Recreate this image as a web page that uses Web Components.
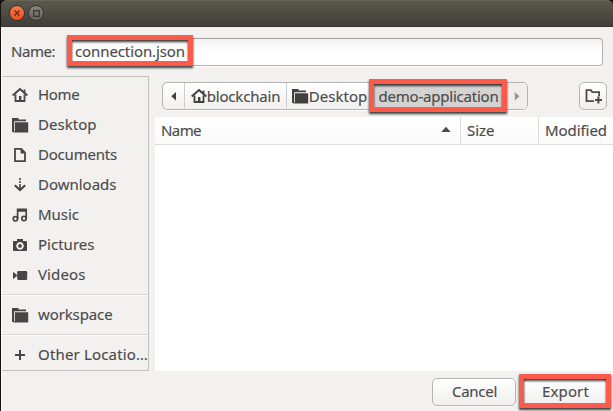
<!DOCTYPE html>
<html lang="en">
<head>
<meta charset="utf-8">
<title>Export</title>
<style>
html,body{margin:0;height:100%;overflow:hidden;background:#151214}
body{font:15px/20px "Noto Sans","Open Sans",sans-serif;color:#4b4b4b;-webkit-text-stroke:.15px}
</style>
</head>
<body>
<save-dialog></save-dialog>
<script>
const define=(name,html,setup)=>customElements.define(name,class extends HTMLElement{
  connectedCallback(){
    if(this.shadowRoot)return;
    this.attachShadow({mode:'open'}).innerHTML=html;
    if(setup)setup(this,this.shadowRoot);
  }
});

/* Text label whose tracking is adjusted to a given advance width. */
define('ui-label',`<style>:host{display:inline-block;white-space:pre;flex:none}span{display:inline-block}</style><span></span>`,(el,root)=>{
  const s=root.querySelector('span'),w=+el.getAttribute('w'),t=el.getAttribute('text');
  s.textContent=t;
  if(w){
    s.style.letterSpacing=((w-s.getBoundingClientRect().width)/t.length).toFixed(3)+'px';
    el.style.width=w+'px';
  }
});

const icons={
home:'<path d="M.7 8.600 8 2l7.300 6.600" fill="none" stroke="currentColor" stroke-width="2"/><path d="M3.500 7.500V14h9V7.500" fill="none" stroke="currentColor" stroke-width="1.800"/><path d="M7 9h2.400v5H7zM11.600 2.500h1.800v4l-1.800-1.700z"/>',
folder:'<path d="M0 1h6.500v1.600H14v1.600H2.200V15H0z"/><path d="M3 5.200h13.200V15.400H1.400v-1H3z"/>',
doc:'<path d="M3 1.800h6.200L13 5.700v8.500H3z" fill="none" stroke="currentColor" stroke-width="1.800"/><path d="M8.600 1.500v5h4.600z"/>',
down:'<path d="M7.200 1h1.600v2H7.200zM7.200 4h1.600v2H7.200zM7.200 7h1.600v6H7.200z"/><path d="M2.800 8.300 8 13l5.200-4.700" fill="none" stroke="currentColor" stroke-width="2.200"/>',
music:'<path d="M5.600 12V2.300h8.600v9.200M5.600 4h8.600" fill="none" stroke="currentColor" stroke-width="1.700"/><circle cx="3.400" cy="11.800" r="2.200" fill="none" stroke="currentColor" stroke-width="1.700"/><circle cx="12" cy="11.500" r="2.200" fill="none" stroke="currentColor" stroke-width="1.700"/>',
camera:'<path fill-rule="evenodd" d="M5 2h6v2h2.800Q15 4 15 5.200V13q0 1-1 1H2q-1 0-1-1V5q0-1 1-1h3zM8 5.100a3.800 3.800 0 1 0 .01 0z"/><circle cx="8" cy="8.900" r="1.900"/>',
video:'<rect x="5.200" y="4" width="10" height="9" rx="1.200"/><path d="M1 4.800 5.500 8.500 1 12.200z"/>',
plus:'<path d="M3 7h4V3h2v4h4v2H9v4H7V9H3z"/>',
left:'<path d="M10 4v8.400L5.300 8.200z"/>',
right:'<path d="M5.800 4v8.400l4.700-4.200z"/>',
up:'<path d="M3.300 10h9.400L8 4.800z"/>',
newfolder:'<path d="M9 13.200H1.500V2.100H6l1.200 2.100h6.900v4" fill="none" stroke="currentColor" stroke-width="1.800"/><path d="M12.400 8.500h2v2.500H17v2h-2.600v2.500h-2V13H10v-2h2.400z"/>'
};
define('ui-icon',`<style>:host{display:block;width:16px;height:16px;flex:none}svg{display:block;overflow:visible}</style><svg width="16" height="16" viewBox="0 0 16 16" fill="currentColor"></svg>`,(el,root)=>{
  root.querySelector('svg').innerHTML=icons[el.getAttribute('name')];
});

define('title-bar',`<style>
:host{display:flex;align-items:center;gap:3px;height:27px;box-sizing:border-box;padding-left:8px;border-radius:6px 6px 0 0;background:linear-gradient(#5c584c,#545147 30%,#3f3e39);border-bottom:1px solid #36342f;box-shadow:inset 0 1px #676457}
i{width:16px;height:16px;border-radius:50%;box-sizing:border-box;border:1px solid #35332f;display:grid;place-items:center}
.c{background:linear-gradient(#fa7b50,#ed4f1d);color:#6b2713}.m{background:linear-gradient(#85827a,#64625b);color:#3b3934}
svg{display:block}
</style><i class="c"><svg width="6" height="6"><path d="M.5.5l5 5M5.500.5l-5 5" stroke="currentColor" stroke-width="1.400"/></svg></i><i class="m"><svg width="7" height="7"><path d="M.7.7h5.600v5.600H.7z" stroke="currentColor" stroke-width="1.300" fill="none"/></svg></i>`);

/* Red callout frame laid over a control. */
define('call-out',`<style>:host{position:absolute;box-sizing:border-box;border:5px solid #fc5a4b;filter:drop-shadow(0 2px 1.200px rgba(0,0,0,.75));pointer-events:none;z-index:2}</style>`);

define('side-row',`<style>:host{display:flex;align-items:center;height:30px;gap:10px;padding-left:10px}ui-icon{color:#464646}ui-label{margin-top:-2px}</style>`,(el,root)=>{
  const i=document.createElement('ui-icon');i.setAttribute('name',el.getAttribute('icon'));
  const l=document.createElement('ui-label');l.setAttribute('text',el.getAttribute('text'));l.setAttribute('w',el.getAttribute('w'));
  root.append(i,l);
});

define('side-bar',`<style>
:host{display:block;box-sizing:border-box;width:148px;height:295px;border:1px solid #c3c1bd;border-left-color:#d0cecb;padding-top:3px;overflow:hidden}
hr{border:0;height:1px;background:#d9d7d4;margin:4px 0 5px;box-shadow:0 1px #fafafa}
</style>
<side-row icon="home" text="Home" w="41.500"></side-row>
<side-row icon="folder" text="Desktop" w="58.500"></side-row>
<side-row icon="doc" text="Documents" w="79"></side-row>
<side-row icon="down" text="Downloads" w="78.500"></side-row>
<side-row icon="music" text="Music" w="41"></side-row>
<side-row icon="camera" text="Pictures" w="56.500"></side-row>
<side-row icon="video" text="Videos" w="47.500"></side-row>
<hr><side-row icon="folder" text="workspace" w="74.500"></side-row>
<hr><side-row icon="plus" text="Other Locatio…" w="110"></side-row>`);

define('path-bar',`<style>
:host{display:flex;box-sizing:border-box;width:366px;height:28px;border:1px solid #b5b3b0;border-radius:5px;background:linear-gradient(#fff,#f1f0ef);box-shadow:0 1px #fbfbfb;position:relative}
div{display:flex;align-items:center;justify-content:center;box-sizing:border-box;border-right:1px solid #d0cecb}
ui-icon{color:#414141}
.a{width:22px}.b{width:102px}.c{width:84px;gap:1px;padding-left:2px}.d{width:136px;background:#d5d3d1}.e{flex:1;border:0;background:#efeeed;border-radius:0 4px 4px 0}.e ui-icon{color:#989694}
call-out{left:206px;top:-4px;width:138px;height:33px}
</style>
<div class="a"><ui-icon name="left"></ui-icon></div>
<div class="b"><ui-icon name="home"></ui-icon><ui-label text="blockchain" w="73.500"></ui-label></div>
<div class="c"><ui-icon name="folder"></ui-icon><ui-label text="Desktop" w="58.500"></ui-label></div>
<div class="d"><ui-label text="demo-application" w="120"></ui-label></div>
<div class="e"><ui-icon name="right"></ui-icon></div><call-out></call-out>`);

define('push-button',`<style>:host{display:flex;align-items:center;justify-content:center;box-sizing:border-box;width:84px;height:28px;border:1px solid #b7b5b2;border-radius:5px;background:linear-gradient(#fff,#f0efee);box-shadow:0 1px #fafafa;position:relative;color:#4b4b4b}</style><slot></slot>`);

define('file-list',`<style>
:host{display:block;width:458px;height:254px;background:#fff}
div{display:flex;height:28px;box-sizing:border-box;border-bottom:1px solid #dcdbda;background:linear-gradient(#fff,#fafafa)}
span{display:flex;align-items:center;box-sizing:border-box;padding:0 0 1px 6px;border-right:1px solid #dddcda}
.n{width:306px;justify-content:space-between;padding-right:6px}.s{width:78px}.m{flex:1;border:0}
</style><div><span class="n"><ui-label text="Name" w="40"></ui-label><ui-icon name="up"></ui-icon></span><span class="s"><ui-label text="Size" w="27.500"></ui-label></span><span class="m"><ui-label text="Modified" w="62"></ui-label></span></div>`);

define('save-dialog',`<style>
:host{display:block;width:613px;height:411px;box-sizing:border-box;padding-left:1px}
main{height:384px;background:#f2f1f0;border-left:1px solid #fafaf9;box-sizing:border-box;overflow:hidden}
.name{display:flex;align-items:center;height:49px;padding-left:9px;box-sizing:border-box}
.name ui-label{margin-top:-1px}
.entry{display:flex;align-items:center;box-sizing:border-box;width:536px;height:28px;margin-left:12px;padding-left:7px;border:1px solid #b4b2b0;border-top-color:#9f9d9b;border-radius:4px;background:linear-gradient(#f2f2f2,#fff 50%);position:relative;box-shadow:0 1px #fafafa}
.entry call-out{left:-1px;top:-4px;width:126px;height:31px}
.body{display:flex;height:295px;gap:6px}
side-bar{margin-left:-1px}
.right{display:flex;flex-direction:column}
.tools{display:flex;justify-content:space-between;padding:6px 6px 7px 7px}
.foot{display:flex;justify-content:flex-end;gap:7px;padding:7px 6px 0 0}
.foot ui-label{margin:-3px 0 0 1px}
.foot call-out{left:-5px;top:-5px;width:92px;height:34px}
</style>
<title-bar></title-bar>
<main>
<div class="name"><ui-label text="Name:" w="44"></ui-label><div class="entry"><ui-label text="connection.json" w="110"></ui-label><call-out></call-out></div></div>
<div class="body"><side-bar></side-bar><div class="right"><div class="tools"><path-bar></path-bar><push-button style="width:28px"><ui-icon name="newfolder"></ui-icon></push-button></div><file-list></file-list></div></div>
<div class="foot"><push-button><ui-label text="Cancel" w="45"></ui-label></push-button><push-button><ui-label text="Export" w="47"></ui-label><call-out></call-out></push-button></div>
</main>`);
</script>
</body>
</html>
